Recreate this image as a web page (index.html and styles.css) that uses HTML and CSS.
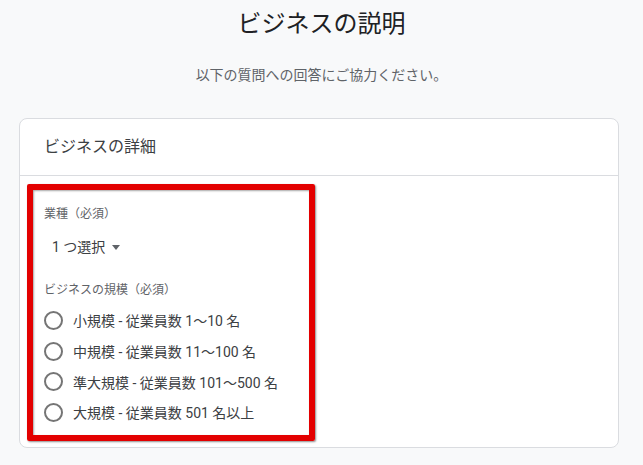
FILE: index.html
```html
<!DOCTYPE html>
<html>
	<head>
		<meta charset="UTF-8">
		<title>ビジネスの説明</title>
		<link rel="stylesheet" href="styles.css">
	</head>
	<body>
		<div class="page-head">
			<h1 class="title">ビジネスの説明</h1>
			<p class="subtitle">以下の質問への回答にご協力ください。</p>
		</div>
		<div class="card">
			<div class="card-head">ビジネスの詳細</div>
			<div class="card-body">
				<div class="mark">
					<div class="field-label">業種（必須）</div>
					<div class="select">1 つ選択<span class="caret"></span></div>
					<div class="field-label size-label">ビジネスの規模（必須）</div>
					<ul class="radios">
						<li><span class="radio"></span>小規模 - 従業員数 1〜10 名</li>
						<li><span class="radio"></span>中規模 - 従業員数 11〜100 名</li>
						<li><span class="radio"></span>準大規模 - 従業員数 101〜500 名</li>
						<li><span class="radio"></span>大規模 - 従業員数 501 名以上</li>
					</ul>
				</div>
			</div>
		</div>
	</body>
</html>
```

FILE: styles.css
```css
body{
	margin: 0;
	background: #f8f9fa;
	font-family: Roboto, "Noto Sans CJK JP", sans-serif;
	color: #3c4043;
}
.page-head{
	text-align: center;
	padding-top: 8px;
}
.title{
	margin: 0;
	font-size: 24px;
	line-height: 32px;
	font-weight: 400;
	color: #202124;
}
.subtitle{
	margin: 25px 0 0;
	font-size: 14px;
	line-height: 20px;
	color: #5f6368;
}
.card{
	margin: 33px 0 0 19px;
	width: 598px;
	background: #fff;
	border: 1px solid #dadce0;
	border-radius: 8px;
}
.card-head{
	padding: 16px 24px;
	font-size: 16px;
	line-height: 24px;
	color: #3c4043;
	border-bottom: 1px solid #dadce0;
}
.card-body{
	padding: 8px 7px 6px;
}
.mark{
	box-sizing: border-box;
	width: 288px;
	border: 6px solid #e30000;
	border-radius: 2px;
	padding: 16px 0 7px 11px;
	box-shadow: 1px 1px 2px rgba(0,0,0,.45), inset 1px 1px 2px rgba(0,0,0,.35);
}
.field-label{
	font-size: 12px;
	line-height: 16px;
	color: #5f6368;
}
.select{
	display: flex;
	align-items: center;
	height: 32px;
	margin-top: 8px;
	padding-left: 8px;
	font-size: 14px;
	color: #3c4043;
}
.caret{
	margin-left: 7px;
	margin-top: 2px;
	border-top: 5px solid #5f6368;
	border-left: 4.5px solid transparent;
	border-right: 4.5px solid transparent;
}
.size-label{
	margin-top: 20px;
}
.radios{
	margin: 7px 0 0;
	padding: 0;
	list-style: none;
}
.radios li{
	display: flex;
	align-items: center;
	gap: 10px;
	height: 30.7px;
	font-size: 14px;
	color: #3c4043;
}
.radio{
	width: 15px;
	height: 15px;
	border: 2px solid #757575;
	border-radius: 50%;
	flex: none;
}
```
